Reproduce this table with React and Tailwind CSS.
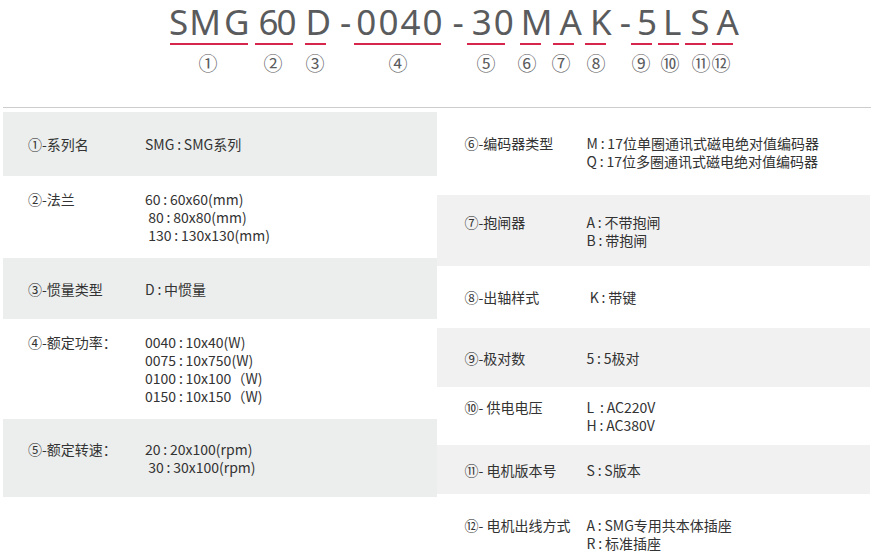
import React from "react";

const letters = [
  { ch: "S", cls: "" },
  { ch: "M", cls: "ml-[1px]" },
  { ch: "G", cls: "ml-[3px]" },
  { ch: "6", cls: "ml-[9px]" },
  { ch: "0", cls: "-ml-[2px]" },
  { ch: "D", cls: "ml-[9px]" },
  { ch: "-", cls: "ml-[9px]" },
  { ch: "0", cls: "ml-[5px]" },
  { ch: "0", cls: "ml-[2px]" },
  { ch: "4", cls: "ml-[2px]" },
  { ch: "0", cls: "ml-[2px]" },
  { ch: "-", cls: "ml-[10px]" },
  { ch: "3", cls: "ml-[8px]" },
  { ch: "0", cls: "ml-[2px]" },
  { ch: "M", cls: "ml-[7px]" },
  { ch: "A", cls: "ml-[7px]" },
  { ch: "K", cls: "ml-[8px]" },
  { ch: "-", cls: "ml-[8px]" },
  { ch: "5", cls: "ml-[6px]" },
  { ch: "L", cls: "ml-[6px]" },
  { ch: "S", cls: "ml-[9px]" },
  { ch: "A", cls: "ml-[7px]" },
];

const underlines = [
  "w-[78px]",
  "ml-[7px] w-[38px]",
  "ml-[12px] w-[21px]",
  "ml-[28px] w-[87px]",
  "ml-[26px] w-[38px]",
  "ml-[15px] w-[21px]",
  "ml-[12px] w-[21px]",
  "ml-[11px] w-[21px]",
  "ml-[25px] w-[21px]",
  "ml-[6px] w-[21px]",
  "ml-[6px] w-[21px]",
  "ml-[6px] w-[21px]",
];

const marks = [
  { t: "①", cls: "" },
  { t: "②", cls: "ml-[45px]" },
  { t: "③", cls: "ml-[22px]" },
  { t: "④", cls: "ml-[63px]" },
  { t: "⑤", cls: "ml-[68px]" },
  { t: "⑥", cls: "ml-[21px]" },
  { t: "⑦", cls: "ml-[14px]" },
  { t: "⑧", cls: "ml-[15px]" },
  { t: "⑨", cls: "ml-[25px]" },
  { t: "⑩", cls: "ml-[9px]" },
  { t: "⑪", cls: "ml-[11px]" },
  { t: "⑫", cls: "ml-[0px]" },
];

const c = "\u2009:\u2009";

const leftRows = [
  { h: "h-[64px]", bg: "bg-[#eceeed]", label: "①-系列名", lines: [`SMG${c}SMG系列`] },
  {
    h: "h-[82px]",
    bg: "bg-white",
    label: "②-法兰",
    lines: [`60${c}60x60(mm)`, ` 80${c}80x80(mm)`, ` 130${c}130x130(mm)`],
  },
  { h: "h-[61px]", bg: "bg-[#eceeed]", label: "③-惯量类型", lines: [`D${c}中惯量`] },
  {
    h: "h-[100px]",
    bg: "bg-white",
    label: "④-额定功率：",
    lines: [`0040${c}10x40(W)`, `0075${c}10x750(W)`, `0100${c}10x100（W)`, `0150${c}10x150（W)`],
  },
  {
    h: "h-[78px]",
    bg: "bg-[#eceeed]",
    label: "⑤-额定转速：",
    lines: [`20${c}20x100(rpm)`, ` 30${c}30x100(rpm)`],
  },
];

const rightRows = [
  {
    h: "h-[87px]",
    bg: "bg-white",
    label: "⑥-编码器类型",
    lines: [`M${c}17位单圈通讯式磁电绝对值编码器`, `Q${c}17位多圈通讯式磁电绝对值编码器`],
  },
  { h: "h-[71px]", bg: "bg-[#f1f1f1]", label: "⑦-抱闸器", lines: [`A${c}不带抱闸`, `B${c}带抱闸`] },
  { h: "h-[62px]", bg: "bg-white", label: "⑧-出轴样式", lines: [` K${c}带键`] },
  { h: "h-[59px]", bg: "bg-[#f1f1f1]", label: "⑨-极对数", lines: [`5${c}5极对`] },
  { h: "h-[58px]", bg: "bg-white", label: "⑩- 供电电压", lines: [`L ${c}AC220V`, `H${c}AC380V`] },
  { h: "h-[49px]", bg: "bg-[#f1f1f1]", label: "⑪- 电机版本号", lines: [`S${c}S版本`] },
  {
    h: "h-[80px]",
    bg: "bg-white",
    label: "⑫- 电机出线方式",
    lines: [`A${c}SMG专用共本体插座`, `R${c}标准插座`],
  },
];

function SpecRow({ row, pad, labelW }) {
  return (
    <div className={`flex items-center ${row.h} ${row.bg} ${pad}`}>
      <div className="flex items-start leading-[18px]">
        <div className={`${labelW} shrink-0`}>{row.label}</div>
        <div className="whitespace-pre">
          {row.lines.map((l, i) => (
            <div key={i}>{l}</div>
          ))}
        </div>
      </div>
    </div>
  );
}

export default function App() {
  return (
    <div className="w-[873px] h-[558px] overflow-hidden bg-white">
      <div className="h-[107px] text-[#5a5b5d]">
        <div
          className="flex pl-[169px] pt-[2px] text-[35px] leading-[40px]"
          style={{ fontFamily: '"Noto Sans", sans-serif' }}
        >
          {letters.map((l, i) => (
            <span key={i} className={l.cls}>
              {l.ch}
            </span>
          ))}
        </div>
        <div className="flex pl-[170px] mt-px">
          {underlines.map((u, i) => (
            <div key={i} className={`h-[1.5px] bg-[#d7264c] ${u}`} />
          ))}
        </div>
        <div
          className="flex pl-[198px] mt-[8px] text-[19px] leading-[20px]"
          style={{ fontFamily: '"Noto Sans CJK SC", sans-serif' }}
        >
          {marks.map((m, i) => (
            <span key={i} className={`flex w-[20px] justify-center ${m.cls}`}>
              {m.t}
            </span>
          ))}
        </div>
      </div>
      <div className="mx-[3px] w-[868px] h-px bg-[#cdcdcd]" />
      <div
        className="flex px-[3px] text-[14px] text-[#333]"
        style={{ fontFamily: '"Noto Sans CJK SC", sans-serif' }}
      >
        <div className="w-[434px] pt-[4px]">
          {leftRows.map((r, i) => (
            <SpecRow key={i} row={r} pad="pl-[25px]" labelW="w-[117px]" />
          ))}
        </div>
        <div className="w-[434px]">
          {rightRows.map((r, i) => (
            <SpecRow key={i} row={r} pad="pl-[28px]" labelW="w-[122px]" />
          ))}
        </div>
      </div>
    </div>
  );
}
